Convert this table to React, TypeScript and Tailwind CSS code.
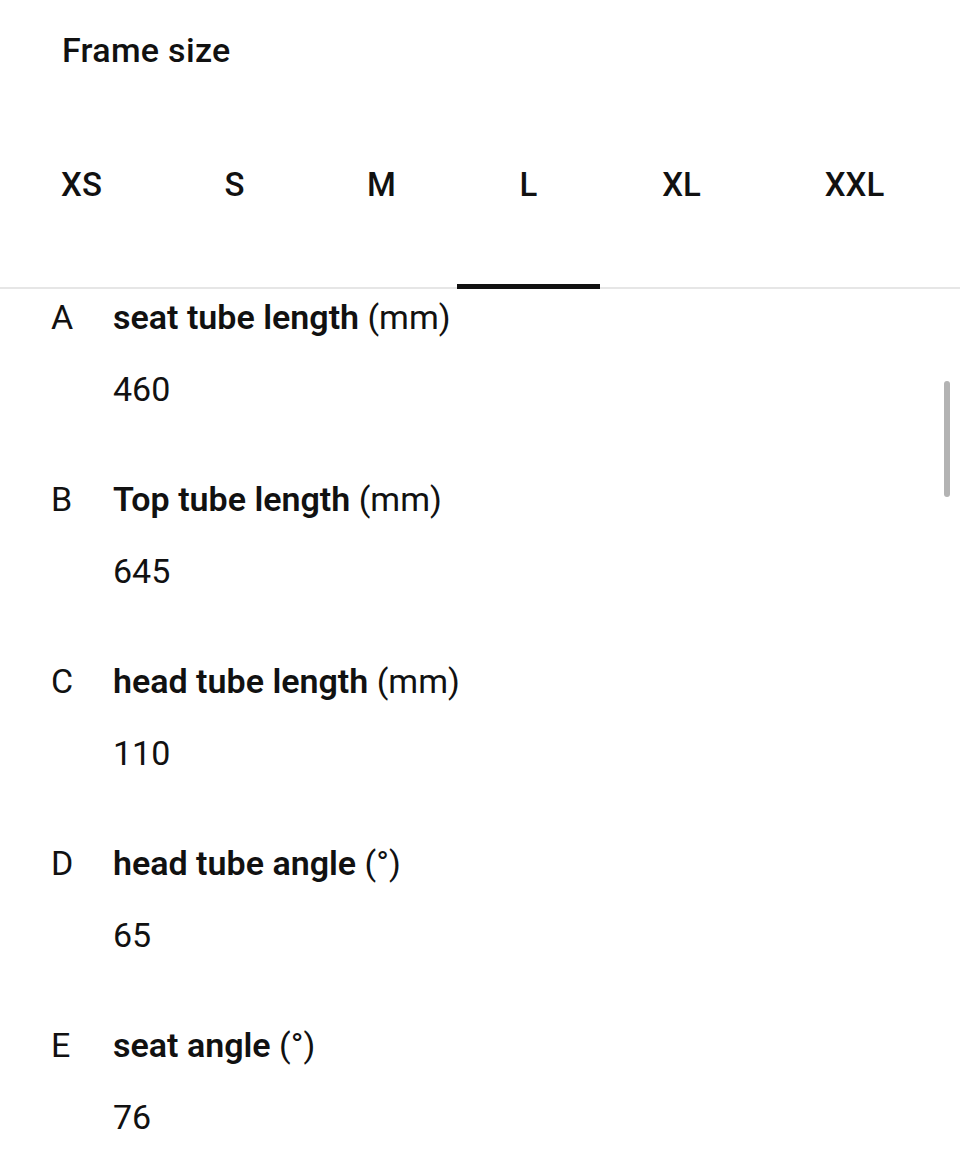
import React, { useState } from 'react';

const sizes = [
  { label: 'XS', width: 'w-[163px]' },
  { label: 'S', width: 'w-[143px]' },
  { label: 'M', width: 'w-[151px]' },
  { label: 'L', width: 'w-[143px]' },
  { label: 'XL', width: 'w-[163px]' },
  { label: 'XXL', width: 'w-[183px]' },
];

const specs = [
  { letter: 'A', name: 'seat tube length', unit: '(mm)', value: '460' },
  { letter: 'B', name: 'Top tube length', unit: '(mm)', value: '645' },
  { letter: 'C', name: 'head tube length', unit: '(mm)', value: '110' },
  { letter: 'D', name: 'head tube angle', unit: '(°)', value: '65' },
  { letter: 'E', name: 'seat angle', unit: '(°)', value: '76' },
];

const App: React.FC = () => {
  const [active, setActive] = useState('L');

  return (
    <div className="relative w-[960px] h-[1172px] overflow-hidden bg-white text-[#111111] font-['Roboto',sans-serif]">
      {/* Titel */}
      <div className="h-[130px] pl-[62px] pt-[28px]">
        <h1 className="text-[34px] leading-[44px] font-medium tracking-[0.3px]">Frame size</h1>
      </div>

      {/* Größen-Tabs */}
      <div className="flex border-b-2 border-[#e6e6e6]">
        {sizes.map(s => (
          <button
            key={s.label}
            onClick={() => setActive(s.label)}
            className={`${s.width} h-[157px] flex flex-col items-center shrink-0`}
          >
            <span className="h-[110px] flex items-center text-[33px] font-medium">{s.label}</span>
            <span className={`mt-auto w-full h-[5px] -mb-[2px] ${active === s.label ? 'bg-[#111111]' : 'bg-transparent'}`}></span>
          </button>
        ))}
      </div>

      {/* Geometrie */}
      <div className="pt-[6px]">
        {specs.map(spec => (
          <div key={spec.letter} className="h-[182px] flex">
            <div className="w-[113px] pl-[51px] text-[34px] leading-[44px]">{spec.letter}</div>
            <div>
              <div className="text-[34px] leading-[44px]">
                <span className="font-semibold">{spec.name}</span> {spec.unit}
              </div>
              <div className="mt-[28px] text-[34px] leading-[44px]">{spec.value}</div>
            </div>
          </div>
        ))}
      </div>

      {/* Scrollbalken */}
      <div className="absolute left-[944px] top-[381px] w-[6px] h-[116px] rounded-full bg-[#b3b3b3]"></div>
    </div>
  );
};

export default App;
